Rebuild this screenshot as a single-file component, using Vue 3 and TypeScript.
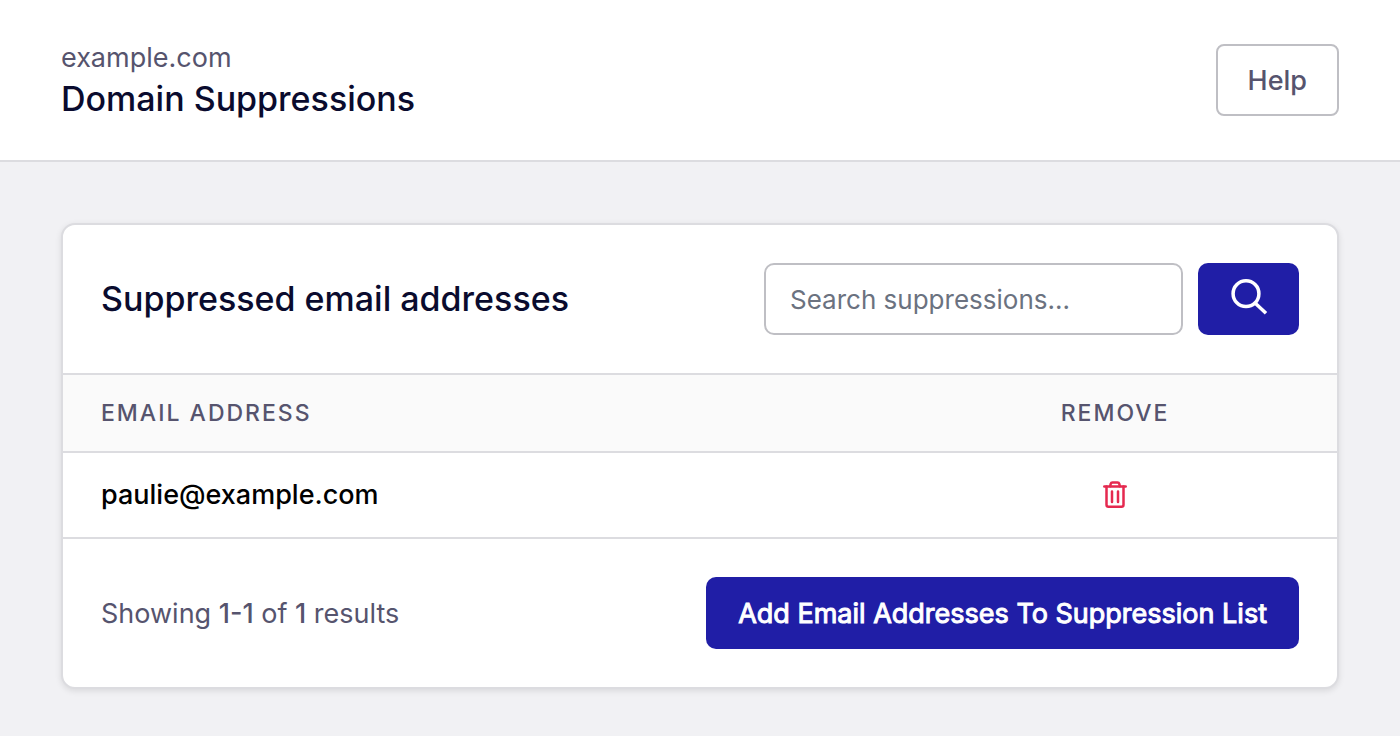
<script setup lang="ts">
import { ref } from 'vue'

interface Suppression {
  id: number
  email: string
}

const query = ref('')
const suppressions = ref<Suppression[]>([{ id: 1, email: 'paulie@example.com' }])
</script>

<template>
  <div class="page">
    <header class="topbar">
      <div class="heading">
        <p class="domain">example.com</p>
        <h1 class="title">Domain Suppressions</h1>
      </div>
      <button type="button" class="help">Help</button>
    </header>

    <main class="content">
      <section class="card">
        <div class="card-head">
          <h2 class="card-title">Suppressed email addresses</h2>
          <form class="search" role="search" @submit.prevent>
            <input
              v-model="query"
              class="search-input"
              type="text"
              aria-label="Search suppressions"
              placeholder="Search suppressions..."
            />
            <button type="submit" class="search-button" aria-label="Search">
              <svg class="search-icon" viewBox="0 0 38 42" aria-hidden="true">
                <circle cx="16" cy="15.7" r="12.9" />
                <path d="M25.300 25.200 36 35.200" />
              </svg>
            </button>
          </form>
        </div>

        <table class="table">
          <thead>
            <tr>
              <th scope="col" class="col-email">Email address</th>
              <th scope="col" class="col-remove">Remove</th>
            </tr>
          </thead>
          <tbody>
            <tr v-for="item in suppressions" :key="item.id">
              <td class="col-email">{{ item.email }}</td>
              <td class="col-remove">
                <button type="button" class="remove" :aria-label="`Remove ${item.email}`">
                  <svg class="trash-icon" viewBox="0 0 24 28" aria-hidden="true">
                    <path d="M1.300 5.600h21.400" />
                    <path d="M7.200 5.200 7.700 2.800a1.800 1.800 0 0 1 1.700-1.300h5.200a1.800 1.800 0 0 1 1.700 1.300l.5 2.400" />
                    <path d="M3.500 5.600v18.200a2 2 0 0 0 2 2h13a2 2 0 0 0 2-2V5.600" />
                    <path d="M9 10.500v10.500M15 10.500v10.500" />
                  </svg>
                </button>
              </td>
            </tr>
          </tbody>
        </table>

        <div class="card-foot">
          <p class="summary">Showing <b>1-1</b> of <b>1</b> results</p>
          <button type="button" class="add">Add Email Addresses To Suppression List</button>
        </div>
      </section>
    </main>
  </div>
</template>

<style>
body {
  background: #f1f1f4;
}
</style>

<style scoped>
.page {
  font-family: Inter, 'Liberation Sans', sans-serif;
  color: #0a0b2e;
}
.page *,
.page {
  box-sizing: border-box;
}
p,
h1,
h2 {
  margin: 0;
}
button {
  font-family: inherit;
  cursor: pointer;
}
.topbar {
  display: flex;
  align-items: center;
  justify-content: space-between;
  padding: 38px 61px;
  background: #fff;
  border-bottom: 2px solid #dcdce0;
}
.heading {
  padding-bottom: 2px;
}
.domain {
  font-size: 27px;
  line-height: 40px;
  color: #56546e;
}
.title {
  font-size: 34px;
  line-height: 42px;
  font-weight: 500;
}
.help {
  height: 72px;
  padding: 0 30px;
  border: 2px solid #bfbfc4;
  border-radius: 8px;
  background: #fff;
  color: #56546e;
  font-size: 27px;
  font-weight: 500;
}
.content {
  padding: 61px;
}
.card {
  overflow: hidden;
  border: 2px solid #dcdce0;
  border-radius: 14px;
  background: #fff;
  box-shadow: 0 2px 6px rgba(0, 0, 0, 0.1);
}
.card-head,
.card-foot {
  display: flex;
  align-items: center;
  justify-content: space-between;
  padding: 38px;
}
.card-title {
  font-size: 34px;
  line-height: 42px;
  font-weight: 500;
}
.search {
  display: flex;
  gap: 15px;
}
.search-input {
  width: 419px;
  height: 72px;
  padding: 0 24px;
  border: 2px solid #bfbfc4;
  border-radius: 10px;
  background: #fff;
  color: #0a0b2e;
  font-family: inherit;
  font-size: 26px;
}
.search-input::placeholder {
  color: #6b7280;
  opacity: 1;
}
.search-button {
  display: flex;
  align-items: center;
  justify-content: center;
  width: 101px;
  height: 72px;
  padding: 0;
  border: 0;
  border-radius: 10px;
  background: #201ea6;
}
.search-icon {
  width: 38px;
  height: 42px;
  fill: none;
  stroke: #fff;
  stroke-width: 3.5;
}
.table {
  width: 100%;
  table-layout: fixed;
  border-collapse: collapse;
}
th {
  height: 78px;
  padding: 0 38px;
  border-top: 2px solid #dcdce0;
  border-bottom: 2px solid #dcdce0;
  background: #fafafa;
  color: #56546e;
  font-size: 23px;
  font-weight: 500;
  letter-spacing: 2px;
  text-align: left;
  text-transform: uppercase;
}
td {
  height: 86px;
  padding: 0 38px;
  border-bottom: 2px solid #dcdce0;
  color: #000;
  font-size: 27px;
  line-height: 28px;
  font-weight: 500;
}
.col-remove {
  width: 35%;
  padding-right: 36px;
  text-align: center;
}
.remove {
  display: inline-flex;
  padding: 0;
  border: 0;
  background: none;
  vertical-align: top;
}
.trash-icon {
  width: 24px;
  height: 28px;
  fill: none;
  stroke: #e5294f;
  stroke-width: 2.5;
  stroke-linecap: round;
}
.summary {
  font-size: 27px;
  color: #56546e;
}
.summary b {
  font-weight: 500;
}
.add {
  height: 72px;
  padding: 0 32px;
  border: 0;
  border-radius: 10px;
  background: #201ea6;
  color: #fff;
  font-size: 27px;
  font-weight: 400;
  -webkit-text-stroke: 1px #fff;
}
</style>
